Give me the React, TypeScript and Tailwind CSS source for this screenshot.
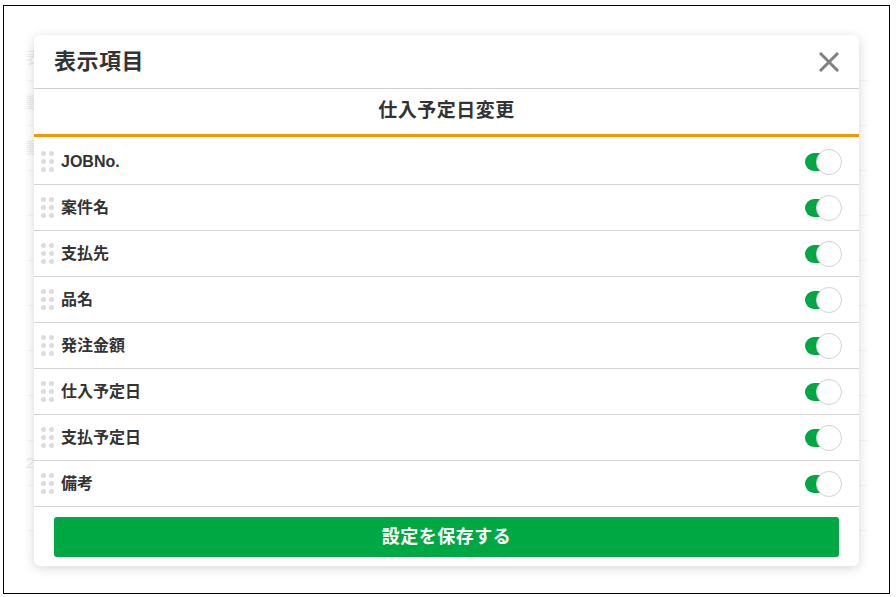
// Column visibility settings modal over a dimmed list page

import React from 'react';

const fields = ['JOBNo.', '案件名', '支払先', '品名', '発注金額', '仕入予定日', '支払予定日', '備考'];

const bgRows = ['表示', '動', '動', '', '', '', '', '', '', '2', ''];

const DragHandle: React.FC = () => (
  <div className="grid grid-cols-2 gap-x-[3px] gap-y-[3px] w-[13px]">
    {Array.from({ length: 6 }).map((_, i) => (
      <span key={i} className="w-[5px] h-[5px] rounded-full bg-[#dcdcdc]" />
    ))}
  </div>
);

const Toggle: React.FC = () => (
  <div className="relative w-[37px] h-[26px]">
    <div className="absolute left-0 top-[4px] w-[30px] h-[18px] rounded-full bg-[#00a844]" />
    <div className="absolute right-0 top-0 w-[26px] h-[26px] rounded-full bg-white border border-[#d2d2d2]" />
  </div>
);

export default function App() {
  return (
    <div
      className="w-[896px] h-[597px] bg-white pl-[3px] pt-[5px]"
      style={{ fontFamily: '"Liberation Sans", "Noto Sans CJK JP", sans-serif' }}
    >
      <div className="relative w-[887px] h-[589px] border border-black overflow-hidden bg-white">
        {/* Page behind the overlay */}
        <div className="pt-[30px] pl-[22px] pr-[22px] text-[15px] text-[#ececec]">
          {bgRows.map((t, i) => (
            <div key={i} className="h-[45px] flex items-center border-b border-[#f6f6f6]">
              {t}
            </div>
          ))}
        </div>

        {/* Modal */}
        <div className="absolute left-[30px] top-[29px] w-[825px] rounded-md bg-white shadow-[0_2px_12px_rgba(0,0,0,0.16)] flex flex-col">
          <div className="h-[54px] border-b border-[#cfcfcf] flex items-center justify-between pl-5 pr-5">
            <h2 className="text-[22px] font-bold text-[#333] tracking-[0.5px]">表示項目</h2>
            <button aria-label="閉じる" className="w-5 h-5">
              <svg viewBox="0 0 20 20" width="20" height="20">
                <path d="M2 2 L18 18 M18 2 L2 18" stroke="#808080" strokeWidth="3" strokeLinecap="square" />
              </svg>
            </button>
          </div>

          <div className="h-[48px] border-b-[3px] border-[#f39800] flex items-center justify-center">
            <span className="text-[19px] font-bold text-[#333] tracking-[0.5px]">仕入予定日変更</span>
          </div>

          <div className="pt-[2px]">
            {fields.map((f) => (
              <div key={f} className="h-[46px] border-b border-[#d4d4d4] flex items-center pl-[7px] pr-[17px]">
                <DragHandle />
                <span className="ml-[7px] flex-1 text-[16px] font-bold text-[#333]">{f}</span>
                <Toggle />
              </div>
            ))}
          </div>

          <div className="px-5 pt-[10px] pb-[9px]">
            <button className="w-full h-[40px] rounded-[3px] bg-[#00a844] text-white text-[18px] font-bold tracking-[0.5px]">
              設定を保存する
            </button>
          </div>
        </div>
      </div>
    </div>
  );
}
